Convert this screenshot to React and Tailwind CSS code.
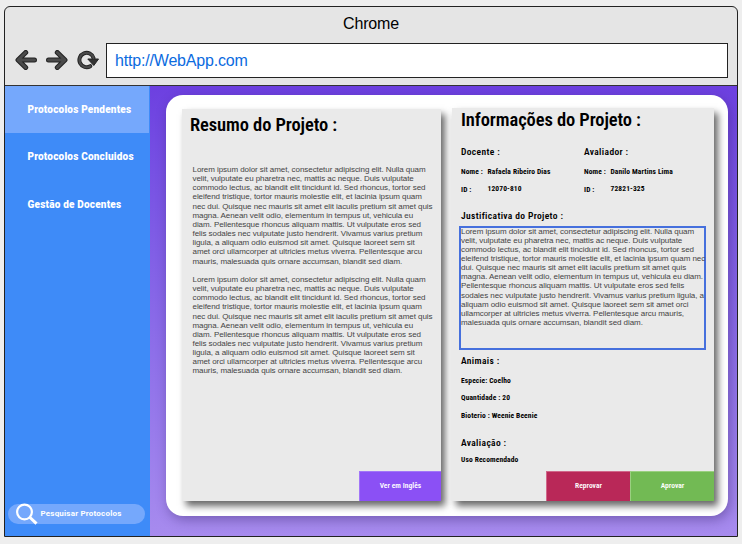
import React from "react";

const LOREM_WIDE = [
  "Lorem ipsum dolor sit amet, consectetur adipiscing elit. Nulla quam",
  "velit, vulputate eu pharetra nec, mattis ac neque. Duis vulputate",
  "commodo lectus, ac blandit elit tincidunt id. Sed rhoncus, tortor sed",
  "eleifend tristique, tortor mauris molestie elit, et lacinia ipsum quam",
  "nec dui. Quisque nec mauris sit amet elit iaculis pretium sit amet quis",
  "magna. Aenean velit odio, elementum in tempus ut, vehicula eu",
  "diam. Pellentesque rhoncus aliquam mattis. Ut vulputate eros sed",
  "felis sodales nec vulputate justo hendrerit. Vivamus varius pretium",
  "ligula, a aliquam odio euismod sit amet. Quisque laoreet sem sit",
  "amet orci ullamcorper at ultricies metus viverra. Pellentesque arcu",
  "mauris, malesuada quis ornare accumsan, blandit sed diam.",
].join("\n");

const LOREM_BOX = [
  "Lorem ipsum dolor sit amet, consectetur adipiscing elit. Nulla quam",
  "velit, vulputate eu pharetra nec, mattis ac neque. Duis vulputate",
  "commodo lectus, ac blandit elit tincidunt id. Sed rhoncus, tortor sed",
  "eleifend tristique, tortor mauris molestie elit, et lacinia ipsum quam nec",
  "dui. Quisque nec mauris sit amet elit iaculis pretium sit amet quis",
  "magna. Aenean velit odio, elementum in tempus ut, vehicula eu diam.",
  "Pellentesque rhoncus aliquam mattis. Ut vulputate eros sed felis",
  "sodales nec vulputate justo hendrerit. Vivamus varius pretium ligula, a",
  "aliquam odio euismod sit amet. Quisque laoreet sem sit amet orci",
  "ullamcorper at ultricies metus viverra. Pellentesque arcu mauris,",
  "malesuada quis ornare accumsan, blandit sed diam.",
].join("\n");

const condensed = "font-['Roboto_Condensed','Roboto',sans-serif] [font-stretch:75%] whitespace-pre text-black";

function Title({ children, className = "" }) {
  return <h1 className={`${condensed} text-[18.500px] font-semibold leading-6 tracking-[-0.090px] ${className}`}>{children}</h1>;
}

function Heading({ children, className = "" }) {
  return <h2 className={`${condensed} text-[9.500px] font-semibold leading-3 tracking-[0.360px] ${className}`}>{children}</h2>;
}

function Small({ children, className = "" }) {
  return <span className={`${condensed} block text-[7.500px] font-bold leading-[10px] tracking-[0.120px] ${className}`}>{children}</span>;
}

function Person({ role, name, id, className }) {
  return (
    <div className={className}>
      <Heading>{role}</Heading>
      <div className="mt-[9px] flex h-[10px]">
        <Small className="w-[26.500px]">Nome :</Small>
        <Small>{name}</Small>
      </div>
      <div className="mt-[7px] flex h-[10px]">
        <Small className="w-[26.500px] pt-px">ID :</Small>
        <Small>{id}</Small>
      </div>
    </div>
  );
}

function BackIcon() {
  return (
    <svg width="22" height="20" viewBox="0 0 22 20" fill="none" strokeLinecap="round" strokeLinejoin="round">
      <path d="M10.700 2.500 3 10l7.700 7.500M3.500 10h16" stroke="#222" strokeWidth="5" />
      <path d="M10.700 2.500 3 10l7.700 7.500M3.500 10h16" stroke="#4a4a4a" strokeWidth="3" />
    </svg>
  );
}

function ForwardIcon() {
  return (
    <svg width="22" height="20" viewBox="0 0 22 20" fill="none" strokeLinecap="round" strokeLinejoin="round">
      <path d="M11.300 2.500 19 10l-7.700 7.500M18.500 10h-16" stroke="#222" strokeWidth="5" />
      <path d="M11.300 2.500 19 10l-7.700 7.500M18.500 10h-16" stroke="#4a4a4a" strokeWidth="3" />
    </svg>
  );
}

function ReloadIcon() {
  return (
    <svg width="22" height="20" viewBox="0 0 22 20" fill="none">
      <path d="M13.300 16.200A7.200 7.200 0 1 1 16.500 8" stroke="#222" strokeWidth="4" strokeLinecap="round" />
      <path d="M10.800 9h10.700l-4.700 6.500z" fill="#333" stroke="#222" strokeLinejoin="round" />
      <path d="M13.300 16.200A7.200 7.200 0 1 1 16.500 8" stroke="#4a4a4a" strokeWidth="2.200" strokeLinecap="round" />
    </svg>
  );
}

function SearchIcon() {
  return (
    <svg width="24" height="22" viewBox="0 0 24 22" fill="none" stroke="#fff" className="shrink-0">
      <circle cx="9.500" cy="9" r="7.400" strokeWidth="2.200" />
      <path d="M14.500 14 21.500 20.700" strokeWidth="3" />
    </svg>
  );
}

const navText = "font-['Roboto',sans-serif] font-black text-white text-[10px] tracking-[0.200px] whitespace-pre";
const button = "flex h-[30px] items-center justify-center border-t border-l pb-0.5 text-white font-['Roboto_Condensed','Roboto',sans-serif] [font-stretch:75%] font-semibold text-[7.500px] tracking-[0.050px] whitespace-pre";
const body = "font-['Liberation_Sans',Arial,sans-serif] text-[8px] leading-[9.150px] tracking-[-0.065px] text-[#444] whitespace-pre";

export default function App() {
  return (
    <div className="h-[544px] w-[742px] overflow-hidden bg-[#eeeeee] pl-1 pt-1.5">
      <div className="flex h-[531px] w-[734px] flex-col overflow-hidden rounded-t-[6px] border border-[#222] bg-[#e5e5e5]">
        <header className="h-[79px] shrink-0 border-b border-[#333]">
          <div className="h-[36px] pt-[5px] text-center font-['Liberation_Sans',Arial,sans-serif] text-[16px] leading-6 tracking-[-0.150px] text-black">Chrome</div>
          <div className="flex h-[34px] items-center">
            <div className="flex w-[101px] gap-[9px] pl-[9.500px]">
              <BackIcon />
              <ForwardIcon />
              <ReloadIcon />
            </div>
            <div className="flex h-[35px] w-[622px] items-center border border-[#222] bg-white pl-2 pt-px font-['Liberation_Sans',Arial,sans-serif] text-[16px] tracking-[-0.180px] text-[#0b6be0]">
              http://WebApp.com
            </div>
          </div>
        </header>
        <div className="flex min-h-0 flex-1">
          <aside className="flex w-[145px] shrink-0 flex-col bg-[#3e8bf8]">
            <div className={`${navText} flex h-[47px] w-36 items-center bg-[#75a8fc] pl-[22.500px]`}>Protocolos Pendentes</div>
            <div className={`${navText} flex h-[47px] items-center pl-[22.500px]`}>Protocolos Concluidos</div>
            <div className={`${navText} flex h-[48px] items-center pl-[22.500px]`}>Gestão de Docentes</div>
            <div className="mb-[12px] ml-[3px] mt-auto flex h-5 w-[137px] items-center rounded-full bg-[#75a8fc] pl-[7px]">
              <SearchIcon />
              <span className="ml-[1.500px] whitespace-pre pb-px font-['Roboto',sans-serif] text-[8px] font-bold tracking-[0.200px] text-white">Pesquisar Protocolos</span>
            </div>
          </aside>
          <main className="flex-1 bg-linear-to-b from-[#6d40e0] to-[#a78bee] pl-4 pt-[9px]">
            <div className="flex h-[421px] w-[562px] rounded-[17px] bg-white pl-4 shadow-[2px_4px_12px_rgba(50,30,100,0.4)]">
              <section className="mt-[14px] flex h-[392px] w-[259px] flex-col bg-[#eaeaea] shadow-[4px_5px_7px_rgba(0,0,0,0.6)]">
                <Title className="pl-2 pt-1">Resumo do Projeto :</Title>
                <p className={`${body} mt-[28px] pl-[10.500px]`}>{LOREM_WIDE + "\n\n" + LOREM_WIDE}</p>
                <div className={`${button} mt-auto w-[82px] self-end border-[#a276f8] bg-[#8b50f5]`}>Ver em Inglês</div>
              </section>
              <section className="ml-[11px] mt-[13px] flex h-[393px] w-[262px] flex-col bg-[#eaeaea] shadow-[4px_5px_7px_rgba(0,0,0,0.6)]">
                <Title className="pl-[9px]">Informações do Projeto :</Title>
                <div className="mt-[14px] flex pl-[9px]">
                  <Person className="w-[123px]" role="Docente :" name="Rafaela Ribeiro Dias" id="12070-810" />
                  <Person role="Avaliador :" name="Danilo Martins Lima" id="72821-325" />
                </div>
                <Heading className="mt-[16px] pl-[9px]">Justificativa do Projeto :</Heading>
                <div className="ml-[7px] mt-[4px] h-[124px] w-[247px] shrink-0 border-2 border-[#4670dd]">
                  <p className={`${body} -mt-[1.500px]`}>{LOREM_BOX}</p>
                </div>
                <Heading className="mt-[5px] pl-[9px]">Animais :</Heading>
                <Small className="mt-[9px] pl-[9px]">Especie: Coelho</Small>
                <Small className="mt-[7px] pl-[9px]">Quantidade : 20</Small>
                <Small className="mt-[8px] pl-[9px]">Bioterio : Weenie Beenie</Small>
                <Heading className="mt-[16px] pl-[9px]">Avaliação :</Heading>
                <Small className="mt-[6px] pl-[9px]">Uso Recomendado</Small>
                <div className="mt-auto flex justify-end">
                  <div className={`${button} w-[84px] border-[#d0688a] bg-[#b92858]`}>Reprovar</div>
                  <div className={`${button} w-[84px] border-[#9ad080] bg-[#72ba54]`}>Aprovar</div>
                </div>
              </section>
            </div>
          </main>
        </div>
      </div>
    </div>
  );
}
